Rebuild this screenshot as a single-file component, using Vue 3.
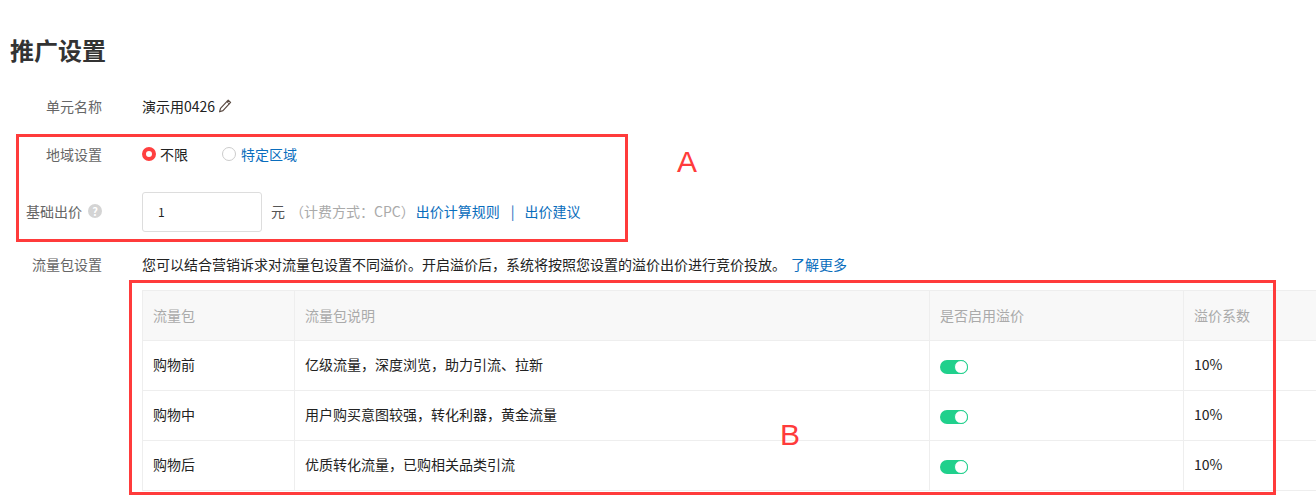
<template>
  <div class="page">
    <h1 class="title">推广设置</h1>

    <div class="form-row name-row">
      <div class="label">单元名称</div>
      <div class="value">
        <span>演示用0426</span>
        <svg class="pencil" width="14" height="14" viewBox="0 0 14 14" fill="none">
          <path d="M10.2 1.2l2.4 2.2-7.6 8.2-3.4 1.2.9-3.4z" stroke="#5a4a42" stroke-width="1.2" stroke-linejoin="round" />
          <path d="M8.9 2.7l2.3 2.2" stroke="#5a4a42" stroke-width="1" />
        </svg>
      </div>
    </div>

    <div class="form-row area-row">
      <div class="label">地域设置</div>
      <div class="value">
        <span class="radio checked"></span>
        <span class="radio-text">不限</span>
        <span class="radio second"></span>
        <a class="link radio-text second-text">特定区域</a>
      </div>
    </div>

    <div class="form-row price-row">
      <div class="label">
        基础出价
        <span class="help">?</span>
      </div>
      <div class="value">
        <div class="input">1</div>
        <span class="unit">元</span>
        <span class="hint">（计费方式：CPC）</span>
        <a class="link">出价计算规则</a>
        <span class="link sep">|</span>
        <a class="link">出价建议</a>
      </div>
    </div>

    <div class="form-row package-row">
      <div class="label">流量包设置</div>
      <div class="value">
        <span>您可以结合营销诉求对流量包设置不同溢价。开启溢价后，系统将按照您设置的溢价出价进行竞价投放。</span>
        <a class="link more">了解更多</a>
      </div>
    </div>

    <table class="table">
      <colgroup>
        <col style="width: 152px" />
        <col style="width: 635px" />
        <col style="width: 254px" />
        <col style="width: 260px" />
      </colgroup>
      <thead>
        <tr>
          <th>流量包</th>
          <th>流量包说明</th>
          <th>是否启用溢价</th>
          <th>溢价系数</th>
        </tr>
      </thead>
      <tbody>
        <tr v-for="row in rows" :key="row.name">
          <td>{{ row.name }}</td>
          <td>{{ row.desc }}</td>
          <td><span class="toggle"><span class="knob"></span></span></td>
          <td class="rate">{{ row.rate }}</td>
        </tr>
      </tbody>
    </table>

    <div class="mark mark-a"></div>
    <div class="mark mark-b"></div>
    <span class="letter letter-a">A</span>
    <span class="letter letter-b">B</span>
  </div>
</template>

<script setup>
const rows = [
  { name: '购物前', desc: '亿级流量，深度浏览，助力引流、拉新', rate: '10%' },
  { name: '购物中', desc: '用户购买意图较强，转化利器，黄金流量', rate: '10%' },
  { name: '购物后', desc: '优质转化流量，已购相关品类引流', rate: '10%' }
]
</script>

<style>
html,
body {
  margin: 0;
  background: #fff;
  overflow: hidden;
}
</style>

<style scoped>
.page {
  position: relative;
  width: 1316px;
  height: 501px;
  overflow: hidden;
  padding: 34px 0 0 10px;
  box-sizing: border-box;
  font-family: "Noto Sans CJK SC", "Noto Sans", sans-serif;
  font-size: 14px;
  color: #222;
}

.title {
  margin: 0;
  font-size: 24px;
  line-height: 32px;
  font-weight: 700;
  color: #333;
}

.form-row {
  display: flex;
  align-items: center;
  gap: 40px;
}

.label {
  width: 92px;
  flex-shrink: 0;
  display: flex;
  justify-content: flex-end;
  align-items: center;
  gap: 6px;
  color: #666;
  line-height: 20px;
}

.value {
  display: flex;
  align-items: center;
  line-height: 20px;
  white-space: nowrap;
}

.name-row {
  margin-top: 30px;
}

.area-row {
  margin-top: 28px;
}

.price-row {
  margin-top: 28px;
}

.price-row .label,
.price-row .value > span,
.price-row .value > a {
  padding-bottom: 2px;
}

.package-row {
  margin-top: 22px;
}

.pencil {
  margin-left: 3px;
}

.radio {
  width: 14px;
  height: 14px;
  box-sizing: border-box;
  border: 1px solid #ccc;
  border-radius: 50%;
  background: #fff;
}

.radio.checked {
  border: 4px solid #ff4040;
}

.radio.second {
  margin-left: 34px;
}

.radio-text {
  margin-left: 4px;
}

.second-text {
  margin-left: 5px;
}

.link {
  color: #0a6ebd;
}

.help {
  width: 14px;
  height: 14px;
  border-radius: 50%;
  background: #d4d4d4;
  color: #fff;
  font-size: 11px;
  font-weight: 700;
  line-height: 14px;
  text-align: center;
}

.input {
  width: 120px;
  height: 40px;
  box-sizing: border-box;
  border: 1px solid #ddd;
  border-radius: 3px;
  padding-left: 15px;
  line-height: 38px;
  font-size: 12px;
}

.unit {
  margin-left: 9px;
  color: #555;
}

.hint {
  color: #aaa;
  margin-left: 5px;
  margin-right: 1px;
}

.sep {
  margin: 0 10px 0 11px;
}

.more {
  margin-left: 5px;
}

.table {
  margin: 16px 0 0 132px;
  width: 1301px;
  table-layout: fixed;
  border-collapse: collapse;
}

.table th,
.table td {
  height: 50px;
  box-sizing: border-box;
  padding: 0 10px 3px;
  border: 1px solid #eee;
  text-align: left;
  font-size: 14px;
}

.table th {
  background: #f8f8f8;
  color: #aaa;
  font-weight: 400;
  padding-bottom: 2px;
}

.table td .toggle {
  vertical-align: middle;
}

.rate {
  font-size: 15px;
}

.toggle {
  display: inline-block;
  position: relative;
  width: 28px;
  height: 14px;
  border-radius: 7px;
  background: #20d08c;
  margin-top: 2px;
}

.knob {
  position: absolute;
  top: 0;
  right: 0;
  width: 14px;
  height: 14px;
  box-sizing: border-box;
  border: 1px solid #20d08c;
  border-radius: 50%;
  background: #fff;
}

.mark {
  position: absolute;
  box-sizing: border-box;
  border: 3px solid #ff3b3b;
}

.mark-a {
  left: 16px;
  top: 134px;
  width: 612px;
  height: 108px;
}

.mark-b {
  left: 129px;
  top: 280px;
  width: 1147px;
  height: 215px;
}

.letter {
  position: absolute;
  font-family: "Liberation Sans", sans-serif;
  font-size: 30px;
  line-height: 34px;
  color: #ff3b3b;
}

.letter-a {
  left: 677px;
  top: 145px;
}

.letter-b {
  left: 780px;
  top: 418px;
}
</style>
